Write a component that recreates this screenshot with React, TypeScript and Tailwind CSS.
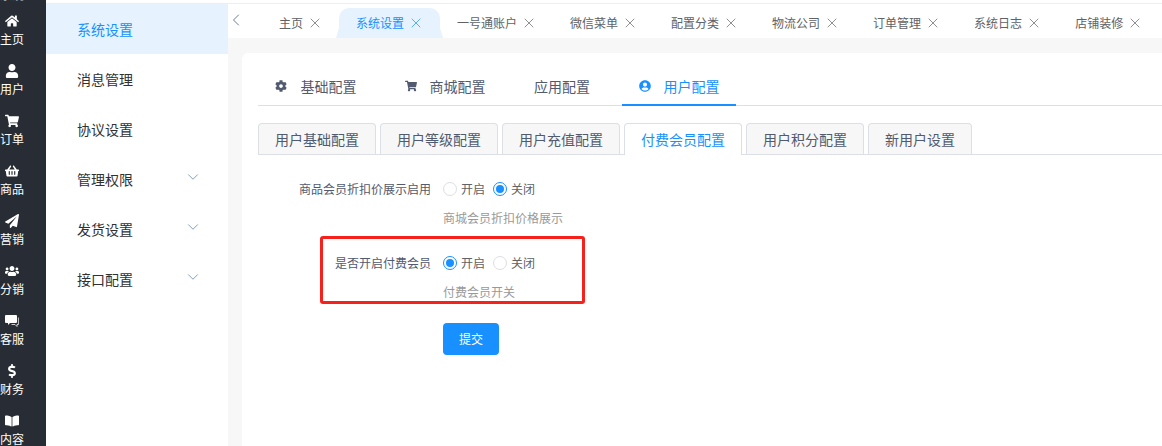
import { ChevronDown, ChevronLeft, X } from "lucide-react";
import {
  FaBookOpen,
  FaCog,
  FaDollarSign,
  FaHome,
  FaPaperPlane,
  FaShoppingBasket,
  FaShoppingCart,
  FaUser,
  FaUserCircle,
  FaUsers,
} from "react-icons/fa";

// square double bubble of the 客服 item
const ChatIcon = ({ className }: { className?: string }) => (
  <svg viewBox="0 0 14 14" fill="none" className={className}>
    <path
      d="M1 1h10a1 1 0 0 1 1 1v6a1 1 0 0 1-1 1H5l-2 2V9H1a1 1 0 0 1-1-1V2a1 1 0 0 1 1-1z"
      fill="currentColor"
    />
    <path d="M13.4 3.5v7h-1.4v2l-2-2H6.5" stroke="currentColor" strokeWidth="1" opacity="0.75" />
  </svg>
);

const navItems = [
  { label: "主页", icon: FaHome },
  { label: "用户", icon: FaUser },
  { label: "订单", icon: FaShoppingCart },
  { label: "商品", icon: FaShoppingBasket },
  { label: "营销", icon: FaPaperPlane },
  { label: "分销", icon: FaUsers },
  { label: "客服", icon: ChatIcon },
  { label: "财务", icon: FaDollarSign },
  { label: "内容", icon: FaBookOpen },
];

const menuItems = [
  { label: "系统设置", active: true },
  { label: "消息管理" },
  { label: "协议设置" },
  { label: "管理权限", arrow: true },
  { label: "发货设置", arrow: true },
  { label: "接口配置", arrow: true },
];

const pageTabs = ["主页", "系统设置", "一号通账户", "微信菜单", "配置分类", "物流公司", "订单管理", "系统日志", "店铺装修"];

const subTabs = ["用户基础配置", "用户等级配置", "用户充值配置", "付费会员配置", "用户积分配置", "新用户设置"];

const Radio = ({ label, checked }: { label: string; checked?: boolean }) => (
  <span className="flex items-center gap-1 text-xs text-[#606266]">
    <span
      className={
        checked
          ? "flex h-[14px] w-[14px] items-center justify-center rounded-full border border-[#1890ff]"
          : "flex h-[14px] w-[14px] items-center justify-center rounded-full border border-[#dcdee2]"
      }
    >
      {checked && <span className="h-2 w-2 rounded-full bg-[#1890ff]" />}
    </span>
    {label}
  </span>
);

const FormRow = ({ label, on, hint }: { label: string; on: boolean; hint: string }) => (
  <div className="flex">
    <div className="w-[173px] pt-[9px] text-right text-xs leading-[18px] text-[#515a6e]">{label}</div>
    <div className="ml-3">
      <div className="flex h-9 items-center gap-2">
        <Radio label="开启" checked={on} />
        <Radio label="关闭" checked={!on} />
      </div>
      <div className="mt-[2px] text-xs leading-[18px] text-[#999999]">{hint}</div>
    </div>
  </div>
);

export default function App() {
  return (
    <div className="relative flex h-[446px] w-[1162px] overflow-hidden bg-white font-['Noto_Sans_CJK_SC','Liberation_Sans',sans-serif]">
      {/* dark rail, labels are cut off on the left in the picture */}
      <div className="w-[46px] shrink-0 bg-[#282c34] text-white">
        <div className="flex h-[14px] w-6 items-start justify-center overflow-hidden">
          <span className="-mt-[14px] whitespace-nowrap text-xs leading-[18px] text-[#a0a4aa]">系统</span>
        </div>
        <div className="flex w-6 flex-col items-center">
          {navItems.map((item) => (
            <div key={item.label} className="flex h-[50px] flex-col items-center">
              <item.icon className="h-[14px] w-[14px]" />
              <span className="mt-[2px] whitespace-nowrap text-xs leading-[18px]">{item.label}</span>
            </div>
          ))}
        </div>
      </div>

      <div className="w-[182px] shrink-0 pt-[3px] shadow-[1px_0_3px_rgba(0,0,0,0.08)]">
        <div className="border-t border-[#eeeeee]">
          {menuItems.map((item) => (
            <div
              key={item.label}
              className={
                item.active
                  ? "flex h-[50px] items-center justify-between bg-[#e6f3ff] pl-[31px] pr-[28px] text-sm text-[#1890ff]"
                  : "flex h-[50px] items-center justify-between pl-[31px] pr-[28px] text-sm text-[#303133]"
              }
            >
              {item.label}
              {item.arrow && (
                <ChevronDown className="-mx-[2px] -mt-[3px] mb-[1px] h-[18px] w-[18px] text-[#7f9cb8]" strokeWidth={1.3} />
              )}
            </div>
          ))}
        </div>
      </div>

      <div className="flex min-w-0 flex-1 flex-col bg-[#f7f7f7]">
        <div className="h-[38px] shrink-0 bg-white pt-[3px]">
          <div className="flex h-[35px] items-end border-t border-[#eeeeee] pl-[1px]">
            <div className="flex h-[34px] w-[33px] shrink-0 items-center pb-[3px]">
              <ChevronLeft className="-ml-[3px] h-5 w-5 text-[#6b7f95]" strokeWidth={1.2} />
            </div>
            {pageTabs.map((tab) => (
              <div
                key={tab}
                className={
                  tab === "系统设置"
                    ? "relative flex h-[30px] shrink-0 items-center gap-[7px] rounded-t-[10px] bg-[#e6f3ff] pl-[17px] pr-5 text-xs text-[#1890ff] before:absolute before:bottom-0 before:-left-[3px] before:h-[10px] before:w-[3px] before:bg-[#e6f3ff] before:[clip-path:polygon(100%_0,100%_100%,0_100%)] after:absolute after:bottom-0 after:-right-[3px] after:h-[10px] after:w-[3px] after:bg-[#e6f3ff] after:[clip-path:polygon(0_0,100%_100%,0_100%)]"
                    : "flex h-[30px] shrink-0 items-center gap-[7px] pl-[17px] pr-5 text-xs text-[#606266]"
                }
              >
                {tab}
                <span className="flex h-[9px] w-[9px] items-center justify-center">
                  <X className="h-4 w-4 shrink-0 opacity-70" strokeWidth={1.5} />
                </span>
              </div>
            ))}
          </div>
        </div>

        <div className="ml-[14px] mt-[15px] flex-1 rounded-tl-md bg-white pl-4 pt-[26px]">
          <div className="box-content flex h-[26px] gap-[15px] border-b border-[#dcdfe6] text-sm text-[#515a6e]">
            <div className="flex w-[115px] items-center justify-center gap-[14px] pb-3">
              <FaCog className="h-3 w-3" />
              基础配置
            </div>
            <div className="flex w-[114px] items-center justify-center gap-[13px] pb-3">
              <FaShoppingCart className="h-3 w-3" />
              商城配置
            </div>
            <div className="flex w-[90px] items-center justify-center pb-3">应用配置</div>
            <div className="-mb-px flex w-[114px] items-center justify-center gap-[13px] border-b-2 border-[#1890ff] pb-[11px] text-[#1890ff]">
              <FaUserCircle className="h-3 w-3" />
              用户配置
            </div>
          </div>

          <div className="mt-[17px] flex h-[32px] gap-1 border-b border-[#dcdfe6]">
            {subTabs.map((tab) => (
              <div
                key={tab}
                className={
                  tab === "付费会员配置"
                    ? "h-[32px] rounded-t border border-b-0 border-[#dcdfe6] bg-white px-4 text-sm leading-[30px] text-[#1890ff]"
                    : "h-[31px] rounded-t border border-b-0 border-[#dcdfe6] bg-[#f7f7f7] px-4 text-sm leading-[30px] text-[#515a6e]"
                }
              >
                {tab}
              </div>
            ))}
          </div>

          <div className="relative mt-4">
            <FormRow label="商品会员折扣价展示启用" on={false} hint="商城会员折扣价格展示" />
            <div className="mt-[18px]">
              <FormRow label="是否开启付费会员" on={true} hint="付费会员开关" />
            </div>
            <button className="ml-[185px] mt-[22px] h-8 w-14 rounded bg-[#1890ff] text-xs text-white">提交</button>
            {/* red marker drawn over the form */}
            <div className="absolute left-[62px] top-[65px] h-[68px] w-[265px] rounded-[3px] border-[3px] border-[#f5211a]" />
          </div>
        </div>
      </div>
    </div>
  );
}
